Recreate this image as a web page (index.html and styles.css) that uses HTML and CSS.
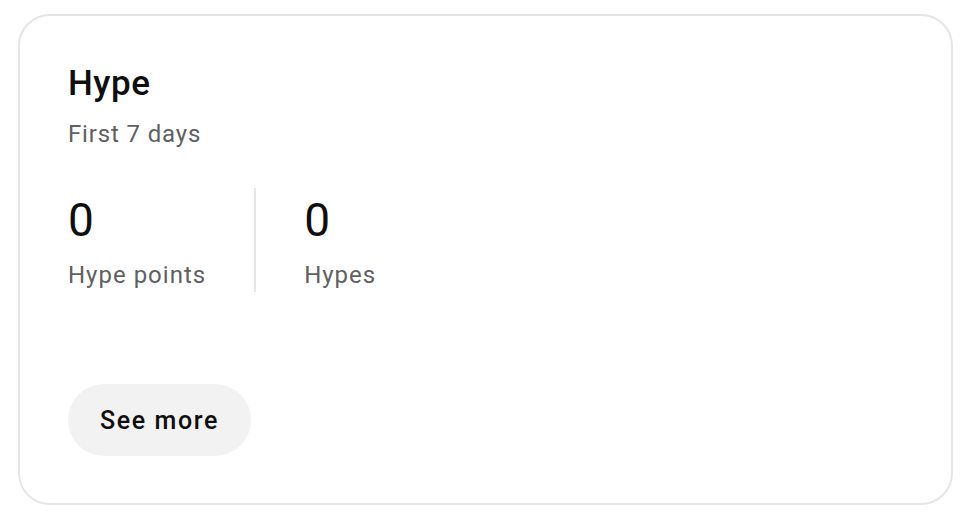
FILE: index.html
```html
<!DOCTYPE html>
<html>
<head>
<meta charset="utf-8">
<link rel="stylesheet" href="styles.css">
</head>
<body>
<div class="card">
  <h2 class="title">Hype</h2>
  <div class="subtitle">First 7 days</div>
  <div class="stats">
    <div class="stat">
      <div class="num">0</div>
      <div class="label">Hype points</div>
    </div>
    <div class="divider"></div>
    <div class="stat">
      <div class="num">0</div>
      <div class="label">Hypes</div>
    </div>
  </div>
  <button class="btn">See more</button>
</div>
</body>
</html>
```

FILE: styles.css
```css
html, body {
  margin: 0;
  padding: 0;
  background: #fff;
}
body {
  font-family: Roboto, "Liberation Sans", sans-serif;
  padding: 14px 0 0 18px;
}
.card {
  box-sizing: border-box;
  width: 935px;
  height: 491px;
  border: 2px solid #e5e5e5;
  border-radius: 32px;
  padding: 48px 48px 0 48px;
  display: flex;
  flex-direction: column;
  align-items: flex-start;
}
.title {
  margin: 0;
  font-size: 35px;
  font-weight: 500;
  line-height: 40px;
  letter-spacing: 0.5px;
  color: #0f0f0f;
}
.subtitle {
  font-size: 24px;
  line-height: 32px;
  letter-spacing: 0.85px;
  color: #606060;
  margin-top: 14px;
}
.stats {
  display: flex;
  margin-top: 38px;
}
.stat {
  display: flex;
  flex-direction: column;
  padding-bottom: 1px;
}
.num {
  font-size: 46px;
  line-height: 64px;
  color: #0f0f0f;
}
.label {
  font-size: 24px;
  line-height: 32px;
  letter-spacing: 1px;
  color: #606060;
  margin-top: 7px;
}
.divider {
  width: 2px;
  background: #e5e5e5;
  margin: 0 48px;
  align-self: stretch;
}
.btn {
  margin-top: 92px;
  height: 72px;
  padding: 0 32px;
  border: none;
  border-radius: 36px;
  background: #f2f2f2;
  font-family: Roboto, "Liberation Sans", sans-serif;
  font-size: 25px;
  font-weight: 500;
  letter-spacing: 1.6px;
  color: #0f0f0f;
}
```
